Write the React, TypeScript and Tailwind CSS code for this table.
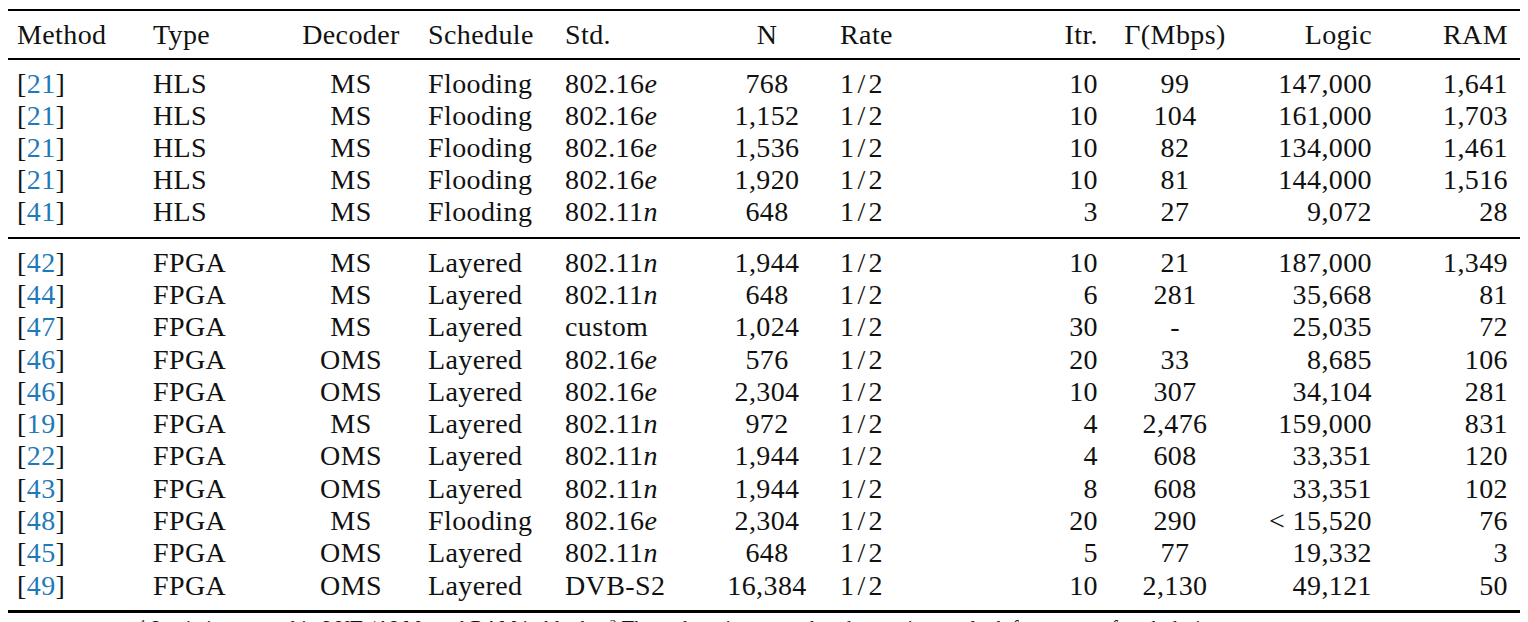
import React from "react";

type Row = {
  ref: string;
  type: string;
  dec: string;
  sched: string;
  std: [string, string];
  n: string;
  rate: string;
  itr: string;
  thr: string;
  logic: string;
  ram: string;
};

const g1: Row[] = [
  { ref: "21", type: "HLS", dec: "MS", sched: "Flooding", std: ["802.16", "e"], n: "768", rate: "1/2", itr: "10", thr: "99", logic: "147,000", ram: "1,641" },
  { ref: "21", type: "HLS", dec: "MS", sched: "Flooding", std: ["802.16", "e"], n: "1,152", rate: "1/2", itr: "10", thr: "104", logic: "161,000", ram: "1,703" },
  { ref: "21", type: "HLS", dec: "MS", sched: "Flooding", std: ["802.16", "e"], n: "1,536", rate: "1/2", itr: "10", thr: "82", logic: "134,000", ram: "1,461" },
  { ref: "21", type: "HLS", dec: "MS", sched: "Flooding", std: ["802.16", "e"], n: "1,920", rate: "1/2", itr: "10", thr: "81", logic: "144,000", ram: "1,516" },
  { ref: "41", type: "HLS", dec: "MS", sched: "Flooding", std: ["802.11", "n"], n: "648", rate: "1/2", itr: "3", thr: "27", logic: "9,072", ram: "28" },
];

const g2: Row[] = [
  { ref: "42", type: "FPGA", dec: "MS", sched: "Layered", std: ["802.11", "n"], n: "1,944", rate: "1/2", itr: "10", thr: "21", logic: "187,000", ram: "1,349" },
  { ref: "44", type: "FPGA", dec: "MS", sched: "Layered", std: ["802.11", "n"], n: "648", rate: "1/2", itr: "6", thr: "281", logic: "35,668", ram: "81" },
  { ref: "47", type: "FPGA", dec: "MS", sched: "Layered", std: ["custom", ""], n: "1,024", rate: "1/2", itr: "30", thr: "-", logic: "25,035", ram: "72" },
  { ref: "46", type: "FPGA", dec: "OMS", sched: "Layered", std: ["802.16", "e"], n: "576", rate: "1/2", itr: "20", thr: "33", logic: "8,685", ram: "106" },
  { ref: "46", type: "FPGA", dec: "OMS", sched: "Layered", std: ["802.16", "e"], n: "2,304", rate: "1/2", itr: "10", thr: "307", logic: "34,104", ram: "281" },
  { ref: "19", type: "FPGA", dec: "MS", sched: "Layered", std: ["802.11", "n"], n: "972", rate: "1/2", itr: "4", thr: "2,476", logic: "159,000", ram: "831" },
  { ref: "22", type: "FPGA", dec: "OMS", sched: "Layered", std: ["802.11", "n"], n: "1,944", rate: "1/2", itr: "4", thr: "608", logic: "33,351", ram: "120" },
  { ref: "43", type: "FPGA", dec: "OMS", sched: "Layered", std: ["802.11", "n"], n: "1,944", rate: "1/2", itr: "8", thr: "608", logic: "33,351", ram: "102" },
  { ref: "48", type: "FPGA", dec: "MS", sched: "Flooding", std: ["802.16", "e"], n: "2,304", rate: "1/2", itr: "20", thr: "290", logic: "< 15,520", ram: "76" },
  { ref: "45", type: "FPGA", dec: "OMS", sched: "Layered", std: ["802.11", "n"], n: "648", rate: "1/2", itr: "5", thr: "77", logic: "19,332", ram: "3" },
  { ref: "49", type: "FPGA", dec: "OMS", sched: "Layered", std: ["DVB-S2", ""], n: "16,384", rate: "1/2", itr: "10", thr: "2,130", logic: "49,121", ram: "50" },
];

const grid =
  "grid grid-cols-[140px_142px_122px_146px_142px_134px_166px_110px_130px_144px_134px] items-center";

function Rate() {
  return (
    <span>
      1<span className="mx-[3px]">/</span>2
    </span>
  );
}

function DataRow({ r, h }: { r: Row; h: string }) {
  return (
    <div className={`${grid} ${h} whitespace-nowrap`}>
      <div className="pl-[9px]">
        [<span className="text-[#1f7ab9]">{r.ref}</span>]
      </div>
      <div className="pl-[5px]">{r.type}</div>
      <div className="text-center">{r.dec}</div>
      <div className="pl-[16px]">{r.sched}</div>
      <div className="pl-[7px]">
        {r.std[0]}
        {r.std[1] && <i>{r.std[1]}</i>}
      </div>
      <div className="text-center">{r.n}</div>
      <div className="pl-[6px]">
        <Rate />
      </div>
      <div className="text-right pr-[12px]">{r.itr}</div>
      <div className="text-center">{r.thr}</div>
      <div className="text-right pr-[12px]">{r.logic}</div>
      <div className="text-right pr-[10px]">{r.ram}</div>
    </div>
  );
}

export default function App() {
  return (
    <div
      className="w-[1528px] h-[622px] overflow-hidden bg-white text-[#111] text-[28px] leading-[32px] tracking-[0.4px]"
      style={{ fontFamily: '"Liberation Serif", "Times New Roman", serif' }}
    >
      <div className="mx-[8px] pt-[9px]">
        <div className="h-[2px] bg-black" />
        <div className={`${grid} h-[47px] whitespace-nowrap`}>
          <div className="pl-[9px]">Method</div>
          <div className="pl-[5px]">Type</div>
          <div className="text-center">Decoder</div>
          <div className="pl-[16px]">Schedule</div>
          <div className="pl-[7px]">Std.</div>
          <div className="text-center">N</div>
          <div className="pl-[6px]">Rate</div>
          <div className="text-right pr-[12px]">Itr.</div>
          <div className="text-center">Γ(Mbps)</div>
          <div className="text-right pr-[12px]">Logic</div>
          <div className="text-right pr-[10px]">RAM</div>
        </div>
        <div className="h-[2px] bg-black" />
        <div className="pt-[8px] pb-[9px]">
          {g1.map((r, i) => (
            <DataRow key={i} r={r} h="h-[32px]" />
          ))}
        </div>
        <div className="h-[1.5px] bg-black" />
        <div className="pt-[8px] pb-[8px]">
          {g2.map((r, i) => (
            <DataRow key={i} r={r} h="h-[32.3px]" />
          ))}
        </div>
        <div className="h-[3px] bg-black" />
        <div className="h-[9px] overflow-hidden">
          <div className="pl-[132px] pt-[3px] text-[20px] leading-[24px] whitespace-nowrap">
            <sup className="text-[13px]">1</sup> Logic is reported in LUTs/ALMs and RAM in blocks. <sup className="text-[13px]">2</sup> Throughput is reported at the maximum clock frequency of each design.
          </div>
        </div>
      </div>
    </div>
  );
}
